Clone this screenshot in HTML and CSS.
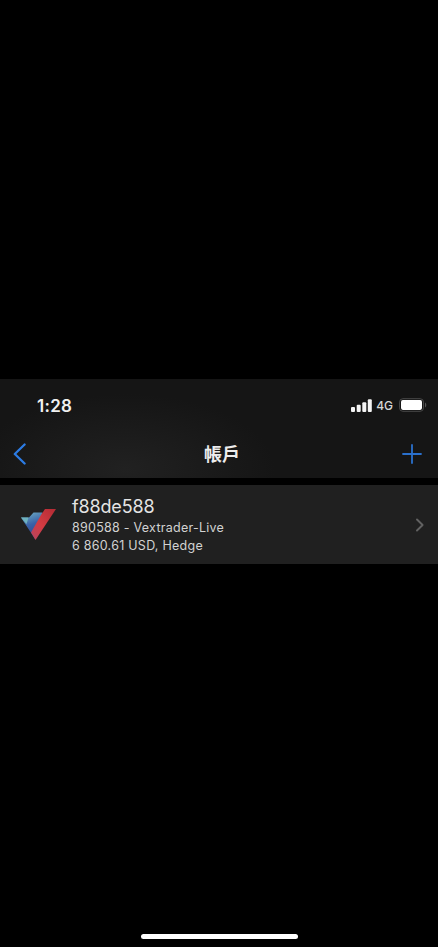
FILE: index.html
```html
<!DOCTYPE html>
<html lang="zh-Hant">
<head>
<meta charset="utf-8">
<title>帳戶</title>
<link rel="stylesheet" href="styles.css">
</head>
<body>
<main class="screen">
  <header class="header">
    <div class="status">
      <span class="time">1:28</span>
      <div class="indicators">
        <svg class="signal" width="21" height="13" viewBox="0 0 21 13" fill="#f4f4f4"><rect x="0" y="8" width="4" height="5" rx="1"/><rect x="5.7" y="5.8" width="4" height="7.2" rx="1"/><rect x="11.3" y="3.2" width="4" height="9.8" rx="1"/><rect x="16.8" y="0.3" width="4" height="12.7" rx="1"/></svg>
        <span class="network">4G</span>
        <svg class="battery" width="28" height="14" viewBox="0 0 28 14"><rect x=".5" y=".7" width="24" height="12.6" rx="3.4" fill="none" stroke="#484848"/><rect x="2" y="2.1" width="21" height="9.8" rx="1.8" fill="#fff"/><path d="M26 4.5c1.7.8 1.7 4.2 0 5z" fill="#555"/></svg>
      </div>
    </div>
    <nav class="nav">
      <svg class="back" width="14" height="22" viewBox="0 0 14 22" fill="none" stroke="#2c7ce5" stroke-width="2.3" stroke-linecap="round" stroke-linejoin="round"><path d="M11.6 1.5 1.8 11l9.8 9.5"/></svg>
      <h1 class="title">帳戶</h1>
      <svg class="add" width="20" height="20" viewBox="0 0 20 20" stroke="#2a70cc" stroke-width="1.8" stroke-linecap="round"><path d="M10 1v18M1 10h18"/></svg>
    </nav>
  </header>
  <section class="account">
    <svg class="logo" width="36" height="33" viewBox="0 0 36 33">
      <defs>
        <linearGradient id="blue" x1=".3" y1="0" x2=".6" y2="1"><stop offset="0" stop-color="#6aa9c2"/><stop offset=".45" stop-color="#3a62a8"/><stop offset="1" stop-color="#2d3f88"/></linearGradient>
        <linearGradient id="red" x1="1" y1="0" x2="0" y2="1"><stop offset="0" stop-color="#b22b34"/><stop offset=".55" stop-color="#d33b42"/><stop offset="1" stop-color="#b44560"/></linearGradient>
      </defs>
      <path d="M1 9.5h8L13.500 4.500h9L15 31z" fill="url(#blue)"/>
      <path d="M1 9.500h7.500L6.500 16z" fill="#6fb3bf"/>
      <path d="M25 1h11L15.500 32 11 24.500 21 7z" fill="url(#red)"/>
    </svg>
    <div class="details">
      <div class="name">f88de588</div>
      <div class="server">890588 - Vextrader-Live</div>
      <div class="balance">6 860.61 USD, Hedge</div>
    </div>
    <svg class="chevron" width="9" height="14" viewBox="0 0 9 14" fill="none" stroke="#626262" stroke-width="1.9" stroke-linecap="round" stroke-linejoin="round"><path d="m2 1.500 5.600 5.500L2 12.500"/></svg>
  </section>
  <div class="home"></div>
</main>
</body>
</html>
```
FILE: styles.css
```css
* { box-sizing: border-box; }
body {
  margin: 0;
  background: #000;
  color: #e8e8e8;
  font-family: Inter, "Noto Sans CJK TC", sans-serif;
}
.screen {
  display: flex;
  flex-direction: column;
  height: 947px;
  padding-top: 379px;
  overflow: hidden;
}
.header {
  height: 99px;
  background: radial-gradient(ellipse 150px 75px at 125px 90px, #212121, #151515);
}
.status {
  display: flex;
  justify-content: space-between;
  align-items: center;
  height: 53px;
  padding: 0 11px 0 37px;
}
.time {
  font-size: 17px;
  font-weight: 600;
  letter-spacing: .3px;
  color: #f0f0f0;
}
.indicators { display: flex; align-items: center; padding-bottom: 1px; }
.signal { margin-right: -1px; }
.network {
  margin: 1px 6px 0 5px;
  font-size: 12px;
  font-weight: 500;
  color: #d8d8d8;
}
.nav {
  display: grid;
  grid-template-columns: 20px 1fr 20px;
  align-items: center;
  height: 44px;
  padding: 0 16px 0 13px;
}
.title {
  margin: 0;
  padding: 1px 0 0 9px;
  text-align: center;
  font-size: 18px;
  font-weight: 700;
  line-height: 24px;
  color: #ededed;
}
.account {
  display: flex;
  align-items: center;
  height: 79px;
  margin-top: 7px;
  padding: 0 14px 0 20px;
  background: #202020;
}
.details { flex: 1; margin-left: 16px; }
.name { font-size: 18px; line-height: 24px; letter-spacing: -.15px; color: #e4e4e4; }
.server, .balance {
  font-size: 12.5px;
  line-height: 18px;
  letter-spacing: .26px;
  color: #d2d2d2;
}
.home {
  width: 157px;
  height: 5px;
  margin: auto auto 8.5px 140.5px;
  border-radius: 3px;
  background: #fff;
}
```
